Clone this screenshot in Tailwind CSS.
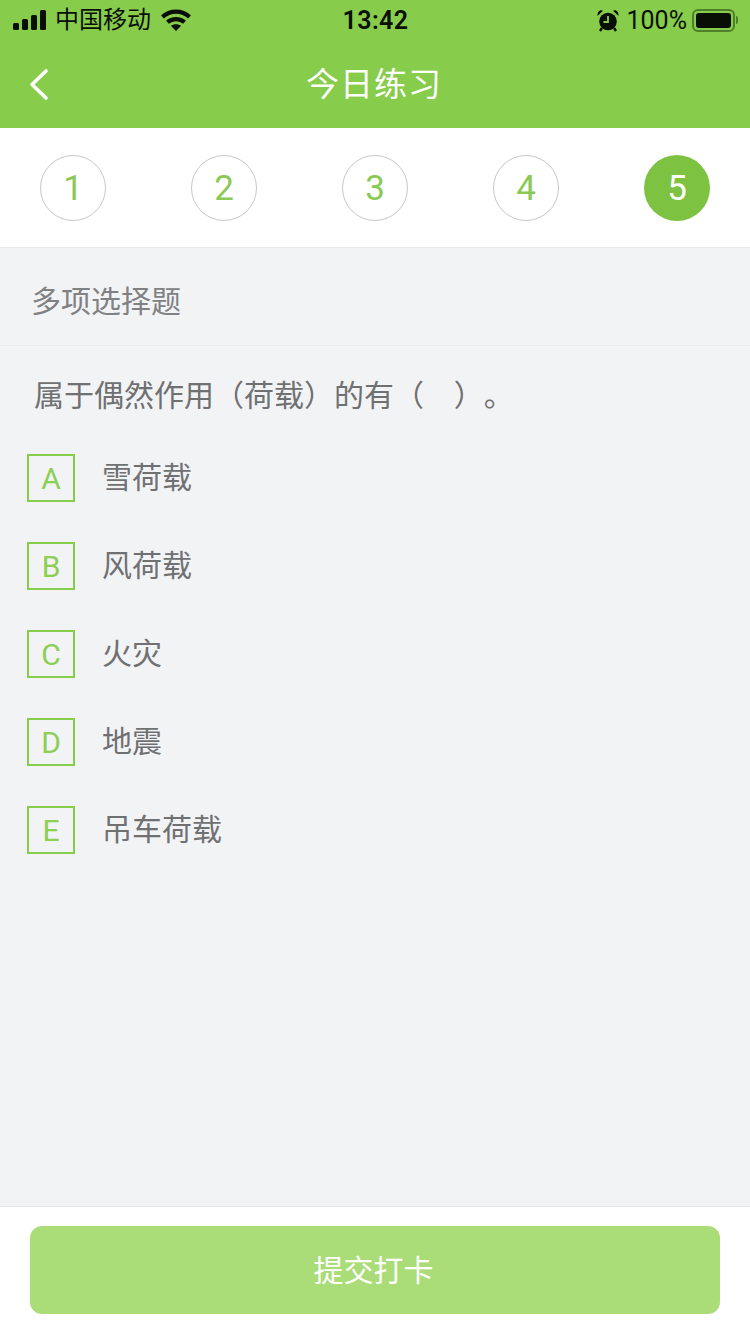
<!DOCTYPE html>
<html lang="zh-CN">
<head>
    <meta charset="UTF-8">
    <meta name="viewport" content="width=device-width, initial-scale=1.0">
    <title>今日练习</title>
    <script src="https://cdn.jsdelivr.net/npm/@tailwindcss/browser@4"></script>
</head>
<body class="bg-[#f2f3f5] font-['Roboto','Noto_Sans_CJK_SC',sans-serif]">
    <div class="w-[750px] h-[1334px] flex flex-col overflow-hidden">
        <!-- Header -->
        <div class="bg-[#87cc4b] h-[128px] shrink-0 flex flex-col">
            <div class="h-[40px] flex items-center justify-between pl-[13px] pr-[12px] text-[#0a0f05]">
                <div class="w-[260px] flex items-center">
                    <svg width="34" height="20" viewBox="0 0 34 20" fill="currentColor">
                        <rect x="0" y="13" width="6" height="7" rx="1.5"/>
                        <rect x="9" y="9" width="6" height="11" rx="1.5"/>
                        <rect x="18" y="5" width="6" height="15" rx="1.5"/>
                        <rect x="27" y="0" width="6" height="20" rx="1.5"/>
                    </svg>
                    <span class="ml-[8px] text-[24px] leading-none">中国移动</span>
                    <svg class="ml-[10px]" width="30" height="22" viewBox="0 0 30 22" fill="none" stroke="currentColor" stroke-width="4.2">
                        <path d="M1.5 8C9 0.8 21 0.8 28.5 8"/>
                        <path d="M6.5 13.2C11 9 19 9 23.5 13.2"/>
                        <path d="M15 22L9.8 16.8C12.6 14.6 17.4 14.6 20.2 16.8Z" fill="currentColor" stroke="none"/>
                    </svg>
                </div>
                <span class="text-[25px] leading-none font-semibold tracking-[0.4px]">13:42</span>
                <div class="w-[260px] flex items-center justify-end">
                    <svg width="22" height="23" viewBox="0 0 22 23" fill="currentColor">
                        <circle cx="11" cy="12.5" r="8.8"/>
                        <path d="M0.5 7L6 1.8C3.5 0 0.2 2 0.5 7ZM21.5 7L16 1.8C18.5 0 21.8 2 21.5 7Z"/>
                        <path d="M11 7V13H6.5" fill="none" stroke="#87cc4b" stroke-width="1.8"/>
                        <path d="M5 19L3 22M17 19L19 22" stroke="currentColor" stroke-width="2.4"/>
                    </svg>
                    <span class="ml-[8px] text-[25px] leading-none">100%</span>
                    <div class="ml-[5px] w-[43px] h-[23px] border-[2px] border-[#4f7f2b] rounded-[6px] p-[2px]">
                        <div class="w-full h-full bg-[#0a0f05] rounded-[3px]"></div>
                    </div>
                    <div class="ml-[1px] w-[2px] h-[8px] bg-[#4f7f2b] rounded-r-[2px]"></div>
                </div>
            </div>
            <div class="relative flex-1 flex items-center justify-center">
                <svg class="absolute left-[29px] top-[28px]" width="20" height="33" viewBox="0 0 20 33" fill="none" stroke="#ffffff" stroke-width="3.6" stroke-linecap="round" stroke-linejoin="round">
                    <path d="M17 3L3 16.5L17 30"/>
                </svg>
                <h1 class="text-[33px] leading-none text-white tracking-[1px] mr-[2px]">今日练习</h1>
            </div>
        </div>

        <!-- Question steps -->
        <div class="bg-white h-[120px] shrink-0 border-b border-[#e8e8e8] flex items-start justify-between px-[40px] pt-[27px]">
            <div class="w-[66px] h-[66px] rounded-full border border-[#c8c8c8] flex items-center justify-center pt-[2px] text-[35px] text-[#8ac955]">1</div>
            <div class="w-[66px] h-[66px] rounded-full border border-[#c8c8c8] flex items-center justify-center pt-[2px] text-[35px] text-[#8ac955]">2</div>
            <div class="w-[66px] h-[66px] rounded-full border border-[#c8c8c8] flex items-center justify-center pt-[2px] text-[35px] text-[#8ac955]">3</div>
            <div class="w-[66px] h-[66px] rounded-full border border-[#c8c8c8] flex items-center justify-center pt-[2px] text-[35px] text-[#8ac955]">4</div>
            <div class="w-[66px] h-[66px] rounded-full bg-[#7ec242] flex items-center justify-center pt-[2px] text-[35px] text-white">5</div>
        </div>

        <!-- Question type -->
        <div class="h-[98px] shrink-0 border-b border-[#ebecee] flex items-center pl-[31px] pt-[10px] text-[30px] leading-none text-[#808183]">多项选择题</div>

        <!-- Question -->
        <div class="flex-1 pl-[27px]">
            <p class="mt-[35px] ml-[7px] text-[30px] leading-[30px] text-[#6f7072] [text-spacing-trim:space-all]">属于偶然作用（荷载）的有（&nbsp;&nbsp;&nbsp;&nbsp;）。</p>
            <div class="mt-[43px] flex flex-col gap-[40px]">
                <div class="flex items-center gap-[27px]">
                    <span class="w-[48px] h-[48px] border-2 border-[#86cd4b] flex items-center justify-center text-[30px] text-[#8ccf53]">A</span>
                    <span class="text-[30px] leading-none text-[#6f7072]">雪荷载</span>
                </div>
                <div class="flex items-center gap-[27px]">
                    <span class="w-[48px] h-[48px] border-2 border-[#86cd4b] flex items-center justify-center text-[30px] text-[#8ccf53]">B</span>
                    <span class="text-[30px] leading-none text-[#6f7072]">风荷载</span>
                </div>
                <div class="flex items-center gap-[27px]">
                    <span class="w-[48px] h-[48px] border-2 border-[#86cd4b] flex items-center justify-center text-[30px] text-[#8ccf53]">C</span>
                    <span class="text-[30px] leading-none text-[#6f7072]">火灾</span>
                </div>
                <div class="flex items-center gap-[27px]">
                    <span class="w-[48px] h-[48px] border-2 border-[#86cd4b] flex items-center justify-center text-[30px] text-[#8ccf53]">D</span>
                    <span class="text-[30px] leading-none text-[#6f7072]">地震</span>
                </div>
                <div class="flex items-center gap-[27px]">
                    <span class="w-[48px] h-[48px] border-2 border-[#86cd4b] flex items-center justify-center text-[30px] text-[#8ccf53]">E</span>
                    <span class="text-[30px] leading-none text-[#6f7072]">吊车荷载</span>
                </div>
            </div>
        </div>

        <!-- Submit -->
        <div class="bg-white h-[128px] shrink-0 border-t border-[#e6e7e9] px-[30px] pt-[19px]">
            <button class="w-full h-[88px] rounded-[12px] bg-[#aadc78] text-white text-[30px] leading-none pt-[2px] pr-[3px]">提交打卡</button>
        </div>
    </div>
</body>
</html>
